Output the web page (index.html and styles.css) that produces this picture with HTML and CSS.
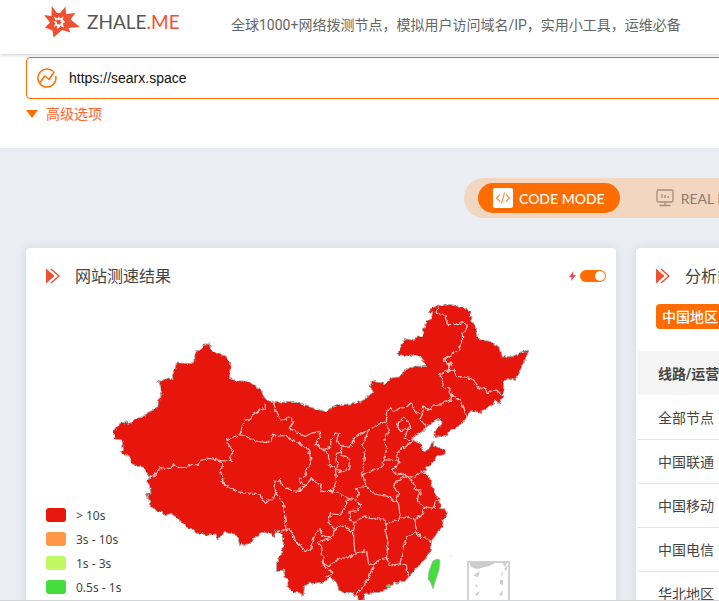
FILE: index.html
```
<!DOCTYPE html>
<html lang="zh-CN">
<head>
<meta charset="utf-8">
<title>ZHALE.ME</title>
<link rel="stylesheet" href="styles.css">
</head>
<body>
<div class="page">
  <header class="header">
    <a class="logo" href="#">
      <svg class="logo-mark" viewBox="0 0 36 34" aria-hidden="true">
        <path fill="#ee5131" d="M7.700 1L13 8l3 0L21.500 1.500 22 9l9.500-1-5 6.500L36 22l-11.500 1 2 4.500L18 25 9.500 32.500 8.500 25.500 1 22.500 6 17.500 0 10l7.500 1z"/>
        <path fill="#fff" d="M9.500 11.500l4 2 1.500-2 1 2 3.500-2-.800 3.500 2.500 2-2.500 1.500 1.300 4-3.500-1.500-3 3-.500-3-3.500.500 2-3-2-2 2.500-.500z"/>
        <path fill="#ee5131" d="M12.500 14.500l2 .500 2-.500 0 2 1.500 1-1.500.500 0 2-2-1-1.500.500 0-2-1-1z"/>
      </svg>
      <span class="logo-text">ZHALE<span class="logo-accent">.ME</span></span>
    </a>
    <p class="slogan">全球1000+网络拨测节点，模拟用户访问域名/IP，实用小工具，运维必备</p>
  </header>

  <section class="search">
    <div class="search-box">
      <svg class="search-icon" viewBox="0 0 20 20" fill="none" stroke="#ff6c00" stroke-width="1.500" stroke-linecap="round" stroke-linejoin="round" aria-hidden="true">
        <path d="M15.500 3A9 9 0 1 0 18.800 8.500"/>
        <path d="M3.500 14l4.300-6 4.400 3.500L17 4"/>
      </svg>
      <input class="search-input" type="text" aria-label="网址" value="https://searx.space">
    </div>
    <button class="advanced" type="button"><span class="caret"></span>高级选项</button>
  </section>

  <main class="main">
    <div class="modes">
      <button class="mode mode-active" type="button">
        <svg class="mode-icon" viewBox="0 0 20 20" aria-hidden="true">
          <rect width="20" height="20" rx="2" fill="#fff"/>
          <path d="M7 6.500L3.500 10 7 13.500M13 6.500l3.500 3.500-3.500 3.500M11.500 4.500l-3 11" fill="none" stroke="#ff8b38" stroke-width="1.100"/>
        </svg>
        CODE MODE
      </button>
      <button class="mode" type="button">
        <svg class="mode-icon" viewBox="0 0 20 20" fill="none" stroke="#a48e7e" stroke-width="1.300" aria-hidden="true">
          <rect x="2" y="2" width="16" height="12" rx="1.500"/>
          <path d="M7 6v4M10 7v3M13 8v2M10 14v3M4.500 17.500h11"/>
        </svg>
        REAL MODE
      </button>
    </div>

    <div class="panels">
      <section class="card">
        <div class="card-head">
          <svg class="arrow" viewBox="0 0 14 16" aria-hidden="true"><path d="M0 .500L8.500 8 0 15.500z" fill="#ee5131"/><path d="M5 1l8 7-8 7" fill="none" stroke="#ee5131" stroke-width="1.500"/></svg>
          <h2 class="card-title">网站测速结果</h2>
          <svg class="bolt" viewBox="0 0 7 10" aria-hidden="true"><path d="M4.500 0L0 6h2.500L2 10l5-6H4.200z" fill="#f5475b"/></svg>
          <input class="switch" type="checkbox" aria-label="加速" checked>
        </div>
        <div class="chart">
          <svg class="map" viewBox="26 303 590 330" aria-label="中国地图">
            <filter id="rough" x="0" y="0" width="1" height="1">
              <feTurbulence type="fractalNoise" baseFrequency=".25" numOctaves="2" seed="4" result="noise"/>
              <feDisplacementMap in="SourceGraphic" in2="noise" scale="4" xChannelSelector="R" yChannelSelector="G"/>
            </filter>
            <g filter="url(#rough)">
            <path fill="#e71710" stroke="#aaa" stroke-width="1" stroke-linejoin="round" d="M113 432L116 427 118 425 122 422 125 423 126.500 421.500 128 423.500 132.500 422.500 135.500 418 142 417.500 146.500 413 157.500 408 159 398.500 162 396.500 161 388 159.500 383.500 156.500 382.500 168.500 378 173 379.500 172.500 375.500 177.500 361.500 180 363 191.500 363.500 195 361.500 194.500 352.500 201.500 349.500 203.500 344 209.500 344 210.500 348 216.500 353.500 220 354.500 226 356 228 361 231 363.500 230 371 229.500 378.500 236 380.500 248.500 381.500 256.500 386.500 261 389 263 395 266.500 400.500 273.500 401.500 290 402.500 300 402.500 306.500 405.500 315 409 326 411.500 330 408.500 340 404.500 356.500 403.500 363.500 400 368.500 395 373.500 392.500 370 386.500 372 381 385 383.500 391.500 378 400.500 376.500 405 370 415 366 426.500 366.500 424 360.500 419.500 356.500 414.500 354.500 409.500 356.500 404 355.500 398.500 356 398 352.500 405 338.500 412.500 340.500 422.500 335 424 327.500 428 320 432.500 318.500 431.500 312.500 428 312 433.500 307.500 439.500 305.500 451.500 304.500 460 307.500 465 308 470 312.500 471.500 320.500 476.500 329.500 479 339.500 484 340.500 491.500 341.500 499 347 501.500 357 512.500 356.500 523.500 351 529 350.500 525.500 358.500 521.500 367.500 518 375 515.500 380.500 508.500 378.500 503.500 381.500 503.500 396.500 500.500 400.500 499.500 404 495 400 493.500 404 488.500 407.500 483.500 409 481.500 413.500 475 411.500 471.500 410.500 466 418.500 456.500 428.500 450 429.500 448.500 435 435 437.500 435 431.500 441 424 440.500 419.500 435 420 430.500 425 426 426.500 423.500 431.500 413.500 436.500 412.500 440.500 421.500 444 421.500 450 424.500 451.500 429 449.500 432.500 441 434 446 438.500 447.500 445.500 450 445 454.500 436.500 456 434 461.500 426.500 467.500 425 472.500 429.500 477.500 432.500 486.500 434 493.500 440 499 440.500 508.500 446.500 509 447.500 514 443.500 518.500 442.500 526.500 437.500 532.500 434 538 431.500 543.500 430 551.500 427 555 425 559.500 415 569.500 409.500 576.500 403.500 581.500 393.500 583.500 386.500 589.500 380 592.500 374 592.500 365 594.500 363 603 358 603 358 597 355 596 353 594 344 593 338.500 590 336.500 581.500 329.500 577.500 323.500 582.500 310 583.500 304.500 585.500 303.500 596 300 593 293.500 592.500 287.500 586.500 288.500 579.500 285 577 283.500 570 276.500 571.500 276.500 562.500 282.500 552.500 283.500 540 280 532 276 531 274 536.500 269.500 533.500 262.500 532.500 253.500 538.500 250 544 239.500 544.500 237.500 536.500 233.500 534 223.500 532.500 217.500 540.500 216 534 206.500 535.500 202 533.500 196.500 533.500 192 529 187.500 527.500 181 521.500 176 517 170.500 513.500 165 515 158.500 511 150 506.500 149 500 146.500 494 151 494 149.500 486 147.500 480.500 150 476.500 146 473 144 467.500 137 466 131.500 463.500 129.500 456.500 120.500 452.500 123.500 450.500 122 440 115 439z"/>
            <g fill="none" stroke="#f7c4c0" stroke-width="1.200" stroke-linejoin="round">
              <path d="M150 476.500L155 475.500 160 467.500 170 468.500 174.500 464.500 178.500 467.500 185 467.500 191 465 198.500 464.500 200 460.500 210 458.500 220.500 460.500 231.500 461.500 229.500 456.500 233.500 452 229 445 226 440 240 434.500 242 427 245 420 250.500 419.500 253.500 415 260 410 265.500 408.500 265 403.500"/>
              <path d="M220.500 460.500L222.500 466.500 220.500 470 223.500 483.500 229 488 236.500 491.500 246 493 256.500 493.500 260 494 261.500 499.500 265.500 502.500 268 500 273.500 499.500 275.500 493"/>
              <path d="M240 434.500L248.500 437 255 441 266.500 442.500 271.500 440 272.500 434 276.500 436.500 285 435.500 291 440 298.500 442.500 308.500 450 311.500 461.500 306.500 470 306 476.500 298.500 478.500 302 484 306.500 486.500 300 486.500 300 491.500 291.500 490.500 281.500 485 280 479.500 275 481.500 274 488 276 493.500"/>
              <path d="M273.500 401.500L276.500 413.500 281.500 420.500 290 417.500 293.500 421.500 289.500 427.500 297 432 305 436.500 312 433 319.500 431.500 320 436.500 316 444 322.500 449.500 330.500 447.500 331 440 335 433.500 339 432.500 336.500 441.500 343.500 446.500 350 447.500 354 439 360.500 433.500 368.500 430.500 376.500 425 386.500 421.500 386.500 411.500 390.500 407.500 393.500 411.500 400 408 406 407.500 411.500 402.500 415 411.500 416.500 413.500 422.500 414.500 423.500 406 428.500 410 434 405 441.500 403.500 451 400 451.500 395 449 387.500 443.500 387.500 442 379 439.500 373.500 448.500 371 449 365 443.500 360 451 355 458.500 350 462.500 341.500 462.500 335 467.500 326.500 463.500 321.500 458.500 324.500 447.500 324.500 445 315 441 315 436 312.500 438.500 307.500"/>
              <path d="M448.500 371L454 370 456.500 376.500 465 377 473.500 379.500 480 389.500 484.500 386.500 487.500 394 491 391 496.500 390 503 396M451.500 395L460 399.500 463.500 406.500 466.500 417.500M422.500 414.500L420 419 426 426.500M448.500 366l2.500-3 1 3z"/>
              <path d="M396.500 426.500L398.500 422.500 404 417.500 409.500 422.500 409.500 427 411.500 429.500 406.500 429.500 400 430.500zM409 426L406 435 405 438 409 440 413 439M386.500 421.500L388.500 431.500 384 440 386.500 448.500 384.500 460M368.500 430.500L362.500 445 365 450 362.500 475 373.500 470 381.500 467.500 384.500 460 392 460 400 461.500 396 457.500 399 451 406.500 445 412.500 441M400 461.500L392.500 470 398 475 403.500 473.500 408 477 415 476.500 422.500 471 425 472.500"/>
              <path d="M403.500 473.500L401 480 396 481 393.500 486.500 398.500 493.500 396.500 501.500M362.500 475L366.500 486.500 373.500 494 386.500 496 398.500 503.500 400.500 518.500M366.500 486.500L356.500 488.500 359.500 494 356 500.500 360.500 505 358.500 510.500 350 511.500 350.500 520 355 521.500 365 516 373.500 519.500 383.500 518.500 386.500 524 400.500 518.500 407 517 413.500 518.500 415 521 416.500 531.500 406.500 537.500 403 548 400 564M386.500 524L385 530 388 541 386.500 558.500"/>
              <path d="M355 521.500L353.500 530 354 544 355 553.500 366.500 550.500 368.500 563.500 373.500 565 378.500 560 386.500 558.500 390 565 400 564 406.500 566.500 408.500 576.500M373.500 565L368.500 578.500 360 590 355 597M355 553.500L347 558 340 558 328.500 566.500 323.500 563.500 321.500 546.500 317.500 541.500 331.500 538.500 334.500 530 339 526 345 525 350 532 353 530M323.500 563.500L325 567 333.500 573.500 326.500 577"/>
              <path d="M276 493.500L283.500 503.500 285 520 286 530 281 531M286 530L290 528.500 295 540 300 545 305 551.500 311 548.500 312.500 538.500 320 528.500 321.500 535 331.500 538.500M334.500 530L328.500 521.500 330.500 513.500 340 515 345 507 348.500 498.500 356.500 500M300 491.500L311.500 478.500 320 485 322.500 491.500 331.500 491.500 341 494 348.500 498.500M331.500 491.500L336.500 481.500 335.500 470 342 472 348.500 469.500 350 458.500 341.500 455 341.500 446.500M322.500 449.500L328.500 455 329.500 465 336.500 469 338 464 336 461 336.500 453.500 341.500 452"/>
              <path d="M403.500 476L411.500 479.500 415 488 418.500 491.500 417.500 501.500 424.500 506.500 422 514 415 520.500M415 490l6 0 0 4-3 0M424.500 506.500L434 508.500 440.500 508.500M434 508.500L435 500.500 440 500M416.500 531.500L421.500 538.500 427 538 431.500 542"/>
            </g>
            </g>
            <path fill="#43dd3e" stroke="#aaa" stroke-width=".7" d="M433 561l4-2 3 1-1 10-4 12-2 7-2-6-3-4 1-8zM386 586l3-2 2 2-3 2z"/>
            <path fill="none" stroke="#d2d2d2" stroke-width="2" d="M468 604v-42h41v42"/>
            <path fill="#ccc" d="M469 562h28l-8 4-12 3-6-2zM502 562h5l-2 5zM474 575l6-4-2 6-4-1zM475 583l3 4-2 0zM475 594l5-3-3 5zM501 574l2-3-1 6zM500 580l3 0 0 5-3-1zM499 595l4-5-1 6zM504 569l4-4-2 6zM450 555l2 0 0 1z"/>
          </svg>
          <ul class="legend">
            <li class="legend-item"><span class="swatch swatch-red"></span>&gt; 10s</li>
            <li class="legend-item"><span class="swatch swatch-orange"></span>3s - 10s</li>
            <li class="legend-item"><span class="swatch swatch-lime"></span>1s - 3s</li>
            <li class="legend-item"><span class="swatch swatch-green"></span>0.5s - 1s</li>
          </ul>
        </div>
      </section>

      <section class="card">
        <div class="card-head">
          <svg class="arrow" viewBox="0 0 14 16" aria-hidden="true"><path d="M0 .500L8.500 8 0 15.500z" fill="#ee5131"/><path d="M5 1l8 7-8 7" fill="none" stroke="#ee5131" stroke-width="1.500"/></svg>
          <h2 class="card-title">分析简报</h2>
        </div>
        <button class="region" type="button">中国地区</button>
        <table class="table">
          <thead><tr><th>线路/运营商</th></tr></thead>
          <tbody>
            <tr><td>全部节点</td></tr>
            <tr><td>中国联通</td></tr>
            <tr><td>中国移动</td></tr>
            <tr><td>中国电信</td></tr>
            <tr><td>华北地区</td></tr>
          </tbody>
        </table>
      </section>
    </div>
  </main>
</div>
</body>
</html>
```
FILE: styles.css
```
* { box-sizing: border-box; }
body {
  margin: 0;
  height: 100vh;
  overflow: hidden;
  background: #eaeef3;
  border-bottom: 1px solid #d2d4d6;
  font-family: Roboto, "Noto Sans CJK SC", sans-serif;
  font-size: 14px;
  color: #444;
}
button, input { font: inherit; }
button { border: 0; background: none; cursor: pointer; white-space: nowrap; }
.page { min-width: 1280px; }

.header {
  position: relative;
  display: flex;
  align-items: center;
  height: 54px;
  padding: 0 44px;
  background: #fff;
  box-shadow: 0 1px 4px rgba(0, 0, 0, .2);
}
.logo {
  display: flex;
  align-items: center;
  gap: 7px;
  width: 187px;
  padding-bottom: 10px;
  color: #555;
  text-decoration: none;
}
.logo-mark { width: 36px; height: 34px; }
.logo-text { font-family: Lato, sans-serif; font-size: 19px; line-height: 24px; }
.logo-accent { color: #ee5131; }
.slogan { margin: 0; padding-bottom: 6px; color: #666; white-space: nowrap; }

.search { height: 94px; padding: 3px 26px; background: #fff; }
.search-box {
  display: flex;
  align-items: center;
  gap: 12px;
  height: 42px;
  padding: 0 10px;
  border: 1px solid #ff6c00;
  border-radius: 4px;
  background: #fff;
}
.search-icon { width: 20px; height: 20px; }
.search-input {
  flex: 1;
  padding: 0;
  border: 0;
  outline: 0;
  font-family: "Liberation Sans", Arial, sans-serif;
  color: #111;
}
.advanced {
  display: flex;
  align-items: center;
  gap: 8px;
  margin-top: 5px;
  padding: 0;
  line-height: 20px;
  color: #ff6430;
}
.caret {
  border: 6px solid transparent;
  border-top: 8px solid #ff6c00;
  border-bottom: 0;
}

.main { padding: 30px 26px; }
.modes {
  display: flex;
  gap: 20px;
  width: 352px;
  margin: 0 auto 30px;
  padding: 5px 14px;
  border-radius: 20px;
  background: #f2d6c0;
}
.mode {
  display: flex;
  align-items: center;
  gap: 6px;
  height: 30px;
  padding: 0 15px;
  border-radius: 15px;
  font-family: Lato, sans-serif;
  font-size: 14px;
  color: #8d7a6e;
}
.mode-active { background: #ff6c00; color: #fff; font-weight: 500; }
.mode-icon { width: 20px; height: 20px; }

.panels { display: grid; grid-template-columns: 590fr 618fr; gap: 20px; }
.card {
  border-radius: 4px;
  background: #fff;
  box-shadow: 0 0 10px rgba(60, 80, 110, .14);
}
.card-head { display: flex; align-items: center; height: 55px; padding: 0 10px 0 20px; }
.arrow { width: 14px; height: 16px; }
.card-title { flex: 1; margin: 0 0 0 15px; padding-bottom: 2px; font-size: 16px; font-weight: 400; color: #444; }
.bolt { width: 7px; height: 10px; margin-right: 4px; }
.switch {
  appearance: none;
  display: flex;
  justify-content: flex-end;
  width: 26px;
  height: 12px;
  margin: 0;
  padding: 1px;
  border-radius: 6px;
  background: #ff6c00;
}
.switch::before { content: ""; width: 10px; height: 10px; border-radius: 5px; background: #fff; }

.chart { position: relative; }
.map { display: block; width: 100%; }
.legend {
  position: absolute;
  top: 200px;
  left: 20px;
  margin: 0;
  padding: 0;
  list-style: none;
  font-family: "Noto Sans", sans-serif;
  font-size: 12px;
}
.legend-item { display: flex; align-items: center; gap: 10px; height: 24px; }
.swatch { width: 20px; height: 14px; border-radius: 3px; }
.swatch-red { background: #e71710; }
.swatch-orange { background: #ff9748; }
.swatch-lime { background: #c0f762; }
.swatch-green { background: #43dd3e; }

.region {
  display: block;
  height: 25px;
  margin: 1px 0 22px 20px;
  padding: 0 6px 2px;
  border-radius: 4px;
  background: #ff6c00;
  color: #fff;
  font-weight: 500;
}
.table { width: calc(100% - 4px); margin: 0 2px; border-collapse: collapse; }
.table th, .table td { height: 44px; padding: 0 20px; text-align: left; border-bottom: 1px solid #e4e4e4; }
.table th { background: #f5f5f5; font-weight: 700; border-bottom: 0; }
```
